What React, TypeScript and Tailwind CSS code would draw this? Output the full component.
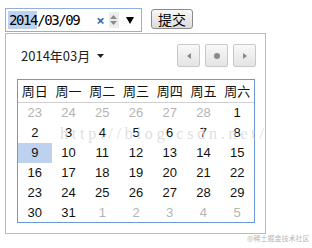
const cjk = "font-['Noto_Sans_CJK_SC',sans-serif]";
const sans = "font-['Liberation_Sans','Noto_Sans_CJK_SC',sans-serif]";

const weekDays = ['周日', '周一', '周二', '周三', '周四', '周五', '周六'];

type Day = { n: number; other?: boolean; selected?: boolean };

const weeks: Day[][] = [
  [{ n: 23, other: true }, { n: 24, other: true }, { n: 25, other: true }, { n: 26, other: true }, { n: 27, other: true }, { n: 28, other: true }, { n: 1 }],
  [{ n: 2 }, { n: 3 }, { n: 4 }, { n: 5 }, { n: 6 }, { n: 7 }, { n: 8 }],
  [{ n: 9, selected: true }, { n: 10 }, { n: 11 }, { n: 12 }, { n: 13 }, { n: 14 }, { n: 15 }],
  [{ n: 16 }, { n: 17 }, { n: 18 }, { n: 19 }, { n: 20 }, { n: 21 }, { n: 22 }],
  [{ n: 23 }, { n: 24 }, { n: 25 }, { n: 26 }, { n: 27 }, { n: 28 }, { n: 29 }],
  [{ n: 30 }, { n: 31 }, { n: 1, other: true }, { n: 2, other: true }, { n: 3, other: true }, { n: 4, other: true }, { n: 5, other: true }],
];

function NavButton({ children }: { children: React.ReactNode }) {
  return (
    <button className="flex h-[23px] w-[23px] items-center justify-center rounded-[2px] border border-[#c8c8c8] bg-gradient-to-b from-[#f8f8f8] to-[#e4e4e4]">
      {children}
    </button>
  );
}

export default function App() {
  return (
    <div className="relative h-[248px] w-[312px] overflow-hidden bg-white pl-[5px] pt-2">
      {/* date input + submit */}
      <div className="flex items-start">
        <div className="flex h-[24px] w-[137px] items-center border border-[#8fb0dd] pl-[2px]">
          <div className="flex h-[18px] items-center font-['DejaVu_Sans_Mono',monospace] text-[14px] tracking-[-1.4px] text-black">
            <span className="flex h-[18px] items-center bg-[#bcd2f0] pl-[1px]">2014</span>
            <span>/03/09</span>
          </div>
          <span className="ml-[17px] text-[15px] font-bold leading-none text-[#3a69b5]">×</span>
          <div className="ml-[4px] flex h-[16px] w-[10px] flex-col items-center justify-center gap-[2px] bg-[#ececec]">
            <svg width="7" height="4" viewBox="0 0 7 4"><path d="M3.5 0L7 4H0Z" fill="#8a8a8a" /></svg>
            <svg width="7" height="4" viewBox="0 0 7 4"><path d="M0 0H7L3.5 4Z" fill="#8a8a8a" /></svg>
          </div>
          <svg className="ml-[7px]" width="8" height="7" viewBox="0 0 8 7"><path d="M0 0H8L4 7Z" fill="#000" /></svg>
        </div>
        <button className={`ml-[9px] mt-px flex h-[20px] w-[42px] items-center justify-center rounded-[3px] border border-[#8a8a8a] bg-gradient-to-b from-[#f7f7f7] to-[#dcdcdc] text-[14px] leading-none text-black ${cjk}`}>
          提交
        </button>
      </div>

      {/* popup */}
      <div className="mt-px h-[201px] w-[261px] border border-[#bcbcbc] pb-[10px] pl-[11px] pr-[10px] pt-[10px]">
        <div className="flex h-[23px] items-center justify-between">
          <div className={`flex items-center pl-[4px] text-[13px] text-[#222] ${cjk}`}>
            <span>2014年03月</span>
            <svg className="ml-[7px]" width="7" height="4" viewBox="0 0 7 4"><path d="M0 0H7L3.5 4Z" fill="#222" /></svg>
          </div>
          <div className="-mr-px flex gap-[5px]">
            <NavButton>
              <svg width="4" height="6" viewBox="0 0 4 6"><path d="M4 0V6L0 3Z" fill="#8a8a8a" /></svg>
            </NavButton>
            <NavButton>
              <span className="h-[6px] w-[6px] rounded-full bg-[#8a8a8a]" />
            </NavButton>
            <NavButton>
              <svg width="4" height="6" viewBox="0 0 4 6"><path d="M0 0V6L4 3Z" fill="#8a8a8a" /></svg>
            </NavButton>
          </div>
        </div>

        <div className="mt-[12px] h-[144px] w-[238px] border border-[#6b9ad6]">
          <div className={`grid h-[23px] grid-cols-7 border-b border-[#d0d0d0] text-[13px] text-[#111] ${cjk}`}>
            {weekDays.map(d => (
              <div key={d} className="flex items-center justify-center">{d}</div>
            ))}
          </div>
          {weeks.map((week, i) => (
            <div key={i} className={`grid h-[20px] grid-cols-7 text-[13px] ${sans}`}>
              {week.map((day, j) => (
                <div
                  key={j}
                  className={`flex items-center justify-center ${day.selected ? 'bg-[#bed2ef]' : ''} ${day.other ? 'text-[#b4b4b4]' : 'text-[#111]'}`}
                >
                  {day.n}
                </div>
              ))}
            </div>
          ))}
        </div>
      </div>

      {/* watermarks */}
      <div className="pointer-events-none absolute left-[60px] top-[122px] font-['Liberation_Serif',serif] text-[16px] tracking-[3.8px] text-[#d6d6d6]/80">
        http://blog.csdn.net/
      </div>
      <div className={`pointer-events-none absolute left-[247px] top-[233px] text-[7px] text-[#b8b8b8] ${cjk}`}>
        @稀土掘金技术社区
      </div>
    </div>
  );
}
